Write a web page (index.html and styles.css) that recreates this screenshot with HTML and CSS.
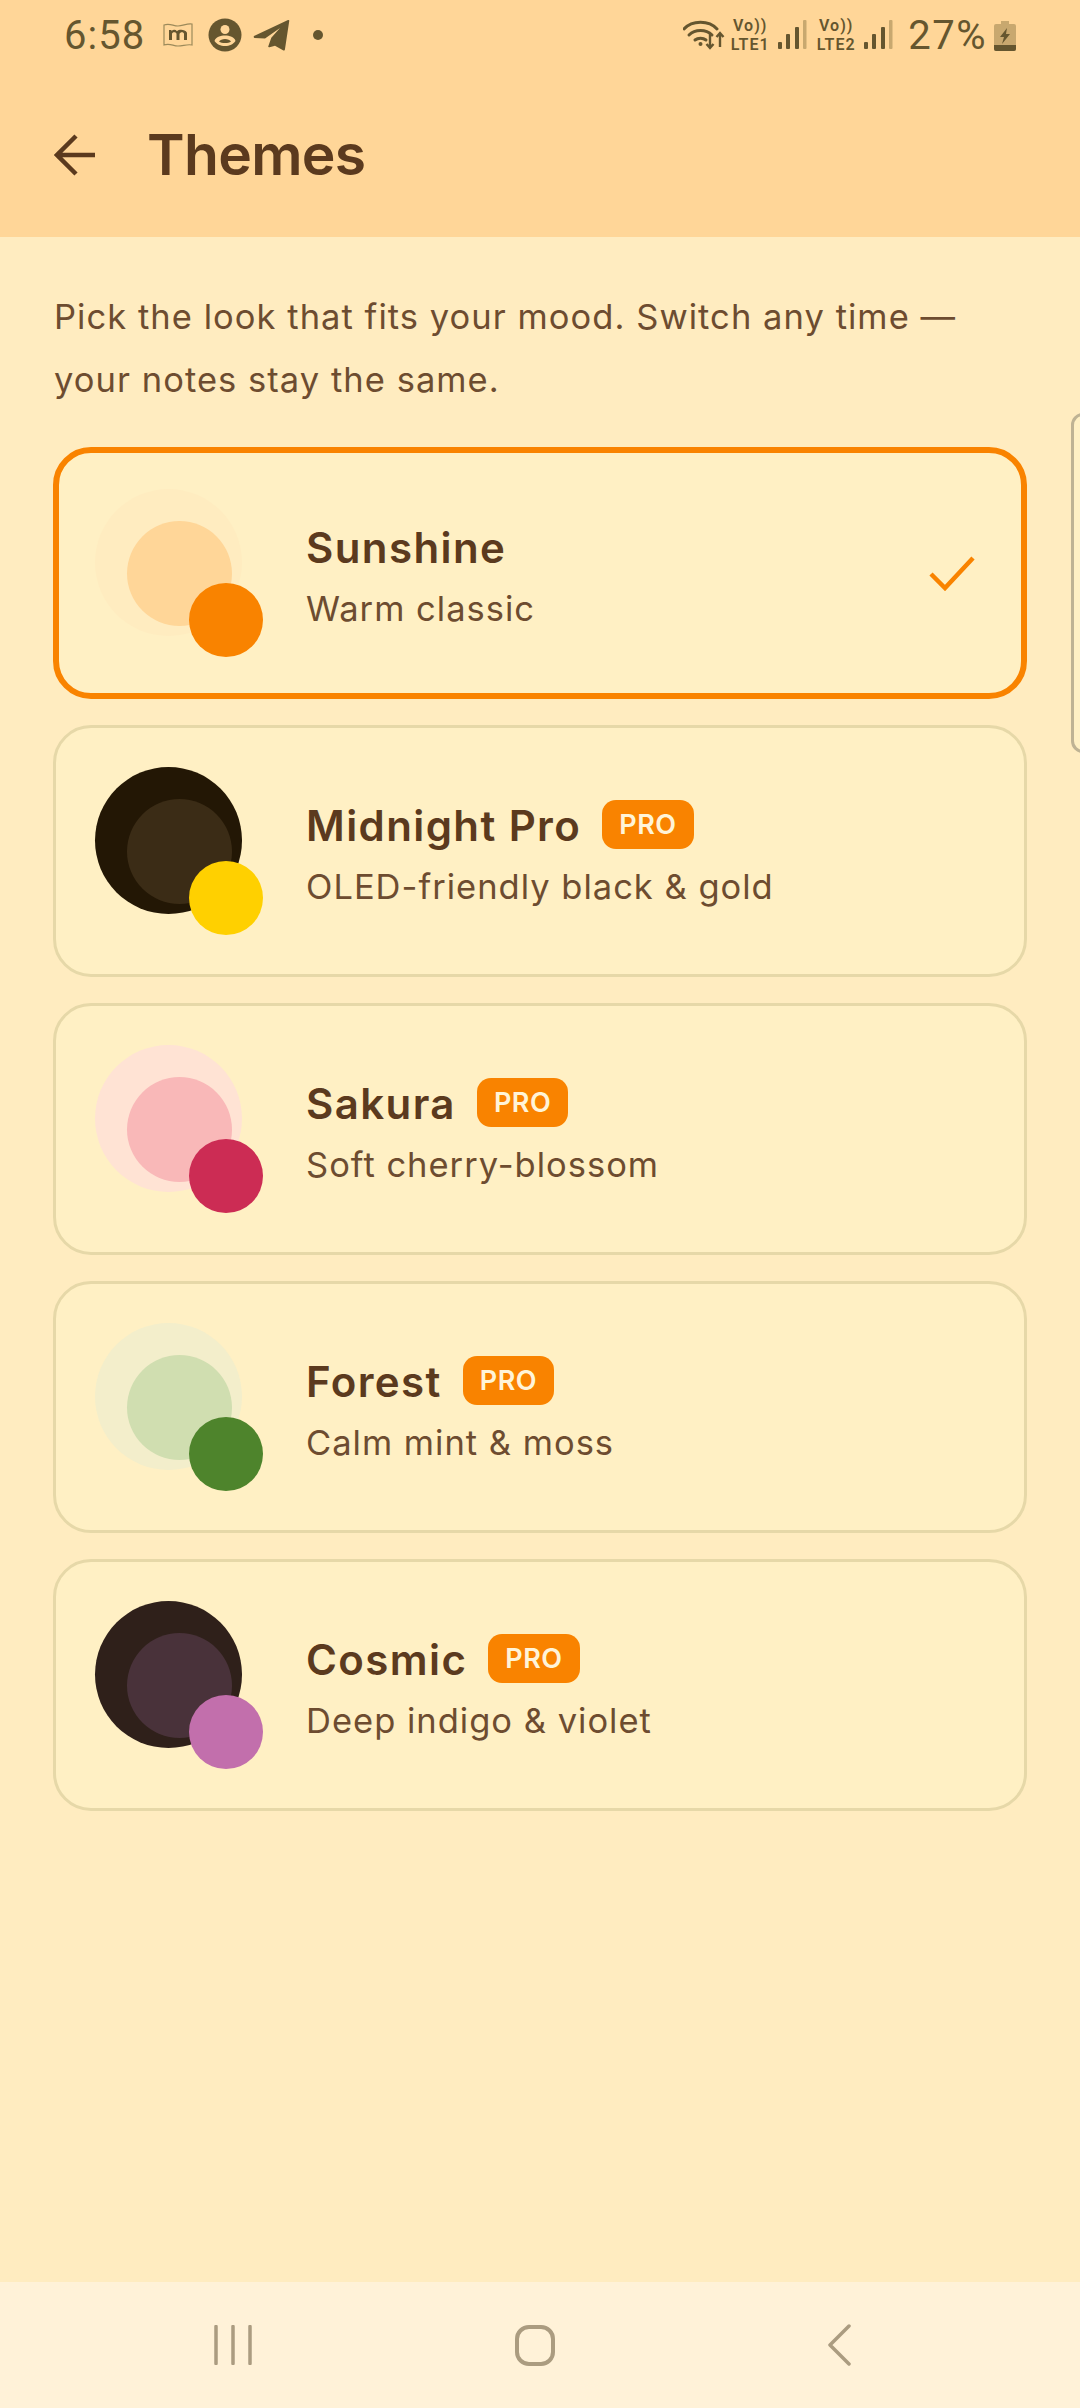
FILE: index.html
```html
<!DOCTYPE html>
<html lang="en">
<head>
  <meta charset="UTF-8" />
  <meta name="viewport" content="width=device-width, initial-scale=1" />
  <title>Themes</title>
  <link rel="stylesheet" href="styles.css">
</head>
<body>
  <div class="phone">
    <header class="appbar">
      <div class="status">
        <div class="status-left">
          <span class="time">6:58</span>
          <svg class="ic-m" viewBox="0 0 30 26"><path d="M1 3c6-2 9 1 14 1s9-3 14-2v21c-5-1-9 1-14 1s-8-3-14-1z" fill="none" stroke="#9c8a5a" stroke-width="1.2"/><path d="M6 18V8h2.500v1.200c1.500-1.800 4-1.800 5.500 0 2-2 8-2 10 1.500V18h-3v-6c0-2.500-4-2.500-4.500 0v6h-3v-6c0-2.500-4.500-2.500-4.500 0v6z" fill="#65562f"/></svg>
          <svg class="ic-avatar" viewBox="0 0 34 34"><circle cx="17" cy="17" r="16.500" fill="#65562f"/><circle cx="17" cy="11.500" r="4.500" fill="#ffd698"/><path d="M6.500 23c1-4 6-5.500 10.500-5.500s9.500 1.500 10.500 5.500c-2 3-6 5-10.500 5s-8.500-2-10.500-5z" fill="#ffd698"/><path d="M11 23.500c1-1.500 3.500-2.500 6-2.500s5 1 6 2.500c-1.500 1-3.500 1.500-6 1.500s-4.500-.5-6-1.500z" fill="#65562f"/></svg>
          <svg class="ic-send" viewBox="0 0 37 32"><path d="M1 17 35 1c1-.3 1.500 .2 1.200 1.200L32 30c-.2 1.500-1 1.800-2 1.200l-8-4.500-5.500 1.500c-1 .2-1.500-.2-1.200-1l3-8.500L27 9 12 19.500 1.500 19c-1-.3-1-1.500-.5-2z" fill="#65562f"/></svg>
          <span class="dot"></span>
        </div>
        <div class="status-right">
          <svg class="ic-wifi" viewBox="0 0 42 32"><g fill="none" stroke="#65562f" stroke-width="3" stroke-linecap="round"><path d="M1 10C9 1 26 1 34 10"/><path d="M6 16c6-6 17-6 23 0"/><path d="M12 21c3-2.500 8-2.500 11 0"/></g><circle cx="17.500" cy="25" r="2" fill="#65562f"/><path d="M27 15v14m-3.500-4 3.500 4 3.500-4M37 28V14m-3.500 4 3.500-4 3.500 4" fill="none" stroke="#65562f" stroke-width="2.400"/></svg>
          <span class="volte"><b>Vo))</b><b>LTE1</b></span>
          <svg class="ic-signal" viewBox="0 0 29 30"><g fill="#65562f"><rect x="0" y="22" width="4" height="7" rx="1"/><rect x="8" y="14" width="4" height="15" rx="1"/><rect x="17" y="7" width="4" height="22" rx="1"/></g><rect x="25" y="0" width="3.500" height="29" rx="1" fill="#c8a86f"/></svg>
          <span class="volte"><b>Vo))</b><b>LTE2</b></span>
          <svg class="ic-signal" viewBox="0 0 29 30"><g fill="#65562f"><rect x="0" y="22" width="4" height="7" rx="1"/><rect x="8" y="14" width="4" height="15" rx="1"/><rect x="17" y="7" width="4" height="22" rx="1"/></g><rect x="25" y="0" width="3.500" height="29" rx="1" fill="#c8a86f"/></svg>
          <span class="battery-pct">27%</span>
          <svg class="ic-battery" viewBox="0 0 22 31"><path d="M7 1h8v3h5a2 2 0 0 1 2 2v23a2 2 0 0 1-2 2H2a2 2 0 0 1-2-2V6a2 2 0 0 1 2-2h5z" fill="#c8a86f"/><path d="M0 25h22v4a2 2 0 0 1-2 2H2a2 2 0 0 1-2-2z" fill="#65562f"/><path d="M13 8 6 17h4l-2 7 8-10h-4z" fill="#65562f"/></svg>
        </div>
      </div>
      <div class="toolbar">
        <svg class="ic-back" viewBox="0 0 42 42"><path d="M41 21H4M22 2 3 21l19 19" fill="none" stroke="#5b3a1e" stroke-width="4.500"/></svg>
        <h1>Themes</h1>
      </div>
    </header>

    <main class="content">
      <p class="intro">Pick the look that fits your mood. Switch any time — your notes stay the same.</p>

      <div class="card selected">
        <div class="swatch">
          <span class="outer sunshine-a"></span><span class="inner sunshine-b"></span><span class="accent sunshine-c"></span>
        </div>
        <div class="info">
          <div class="name-row"><span class="name">Sunshine</span></div>
          <div class="desc">Warm classic</div>
        </div>
        <svg class="ic-check" viewBox="0 0 46 36"><path d="M2 19l14 14L44 3" fill="none" stroke="#f98300" stroke-width="4.500"/></svg>
      </div>

      <div class="card">
        <div class="swatch">
          <span class="outer midnight-a"></span><span class="inner midnight-b"></span><span class="accent midnight-c"></span>
        </div>
        <div class="info">
          <div class="name-row"><span class="name">Midnight Pro</span><span class="pro">PRO</span></div>
          <div class="desc">OLED-friendly black &amp; gold</div>
        </div>
      </div>

      <div class="card">
        <div class="swatch">
          <span class="outer sakura-a"></span><span class="inner sakura-b"></span><span class="accent sakura-c"></span>
        </div>
        <div class="info">
          <div class="name-row"><span class="name">Sakura</span><span class="pro">PRO</span></div>
          <div class="desc">Soft cherry-blossom</div>
        </div>
      </div>

      <div class="card">
        <div class="swatch">
          <span class="outer forest-a"></span><span class="inner forest-b"></span><span class="accent forest-c"></span>
        </div>
        <div class="info">
          <div class="name-row"><span class="name">Forest</span><span class="pro">PRO</span></div>
          <div class="desc">Calm mint &amp; moss</div>
        </div>
      </div>

      <div class="card">
        <div class="swatch">
          <span class="outer cosmic-a"></span><span class="inner cosmic-b"></span><span class="accent cosmic-c"></span>
        </div>
        <div class="info">
          <div class="name-row"><span class="name">Cosmic</span><span class="pro">PRO</span></div>
          <div class="desc">Deep indigo &amp; violet</div>
        </div>
      </div>
    </main>

    <div class="edge-handle"></div>

    <nav class="navbar">
      <svg class="ic-recents" viewBox="0 0 38 40"><path d="M2 1.500v37M19 1.500v37M36 1.500v37" stroke="#ab9c80" stroke-width="3.500" stroke-linecap="round"/></svg>
      <svg class="ic-home" viewBox="0 0 40 41"><rect x="2" y="2" width="36" height="37" rx="12" fill="none" stroke="#ab9c80" stroke-width="4"/></svg>
      <svg class="ic-navback" viewBox="0 0 24 42"><path d="M22 2 3 21l19 19" fill="none" stroke="#ab9c80" stroke-width="3.500" stroke-linecap="round" stroke-linejoin="round"/></svg>
    </nav>
  </div>
</body>
</html>
```

FILE: styles.css
```css
* {
  box-sizing: border-box;
}

html, body {
  margin: 0;
  padding: 0;
}

body {
  font-family: Inter, 'Noto Sans', sans-serif;
  color: #5b3a1e;
}

.phone {
  position: relative;
  width: 1080px;
  height: 2408px;
  display: flex;
  flex-direction: column;
  background: #ffecc0;
  overflow: hidden;
}

/* Top bar */
.appbar {
  height: 237px;
  background: #ffd698;
}

.status {
  height: 70px;
  padding: 0 64px 0 64px;
  display: flex;
  justify-content: space-between;
  align-items: center;
  color: #65562f;
}

.status-left, .status-right {
  display: flex;
  align-items: center;
}

.time {
  font-family: Roboto, sans-serif;
  font-size: 40px;
  width: 99px;
  letter-spacing: 1px;
}

.ic-m {
  width: 30px;
  height: 26px;
  margin-right: 15px;
}

.ic-avatar {
  width: 34px;
  height: 34px;
  margin-right: 11px;
}

.ic-send {
  width: 37px;
  height: 32px;
  margin-right: 23px;
}

.dot {
  width: 10px;
  height: 10px;
  border-radius: 50%;
  background: #65562f;
}

.ic-wifi {
  width: 42px;
  height: 32px;
  margin-right: 4px;
}

.volte {
  display: flex;
  flex-direction: column;
  align-items: center;
  width: 42px;
  font-family: Roboto, sans-serif;
  font-size: 16px;
  line-height: 19px;
  letter-spacing: 1px;
  margin-right: 7px;
}

.volte b {
  font-weight: 600;
}

.ic-signal {
  width: 29px;
  height: 30px;
  margin-right: 8px;
}

.battery-pct {
  font-family: Roboto, sans-serif;
  font-size: 40px;
  letter-spacing: 1.500px;
  margin: 0 7px 0 7px;
}

.ic-battery {
  width: 22px;
  height: 31px;
}

.toolbar {
  height: 167px;
  padding: 3px 0 0 54px;
  display: flex;
  align-items: center;
  gap: 51px;
}

.ic-back {
  width: 42px;
  height: 42px;
}

.toolbar h1 {
  margin: 0;
  font-size: 57px;
  font-weight: 600;
  letter-spacing: -0.7px;
  line-height: 70px;
}

/* Content */
.content {
  flex: 1;
  padding: 48px 53px 0;
}

.intro {
  margin: 0 0 36px;
  font-size: 34.500px;
  line-height: 63px;
  letter-spacing: 1.050px;
  color: #6d4c30;
  padding-left: 1px;
}

.card {
  height: 252px;
  margin-bottom: 26px;
  padding: 0 39px;
  display: flex;
  align-items: center;
  background: #fff0c4;
  border: 3px solid #e6d8a8;
  border-radius: 38px;
}

.card.selected {
  border: 6px solid #f98300;
  padding: 0 36px;
}

.swatch {
  position: relative;
  flex: none;
  width: 168px;
  height: 168px;
  margin-right: 43px;
}

.swatch span {
  position: absolute;
  border-radius: 50%;
}

.outer {
  left: 0;
  top: 0;
  width: 147px;
  height: 147px;
}

.inner {
  left: 32px;
  top: 32px;
  width: 105px;
  height: 105px;
}

.accent {
  left: 94px;
  top: 94px;
  width: 74px;
  height: 74px;
}

.sunshine-a { background: #ffecc0; }
.sunshine-b { background: #ffd698; }
.sunshine-c { background: #f98300; }
.midnight-a { background: #231705; }
.midnight-b { background: #3b2c16; }
.midnight-c { background: #ffd000; }
.sakura-a { background: #ffe3d4; }
.sakura-b { background: #f9b8b8; }
.sakura-c { background: #cc2c54; }
.forest-a { background: #f3eecb; }
.forest-b { background: #d0deb0; }
.forest-c { background: #4e842c; }
.cosmic-a { background: #2f201a; }
.cosmic-b { background: #49323a; }
.cosmic-c { background: #c26fac; }

.info {
  flex: 1;
  padding-top: 3px;
}

.name-row {
  display: flex;
  align-items: center;
  gap: 21px;
  height: 56px;
}

.name {
  font-size: 42px;
  font-weight: 600;
  letter-spacing: 1.400px;
}

.pro {
  height: 49px;
  padding: 0 17px;
  margin-bottom: 3px;
  display: flex;
  align-items: center;
  border-radius: 14px;
  background: #f98300;
  color: #fff4d8;
  font-size: 27px;
  font-weight: 600;
  letter-spacing: 0.5px;
}

.desc {
  margin-top: 12px;
  font-size: 34.500px;
  line-height: 42px;
  letter-spacing: 1px;
  color: #6d4c30;
}

.ic-check {
  width: 46px;
  height: 36px;
  margin-right: 10px;
}

/* sliver of the edge panel on the right side */
.edge-handle {
  position: absolute;
  left: 1071px;
  top: 413px;
  width: 30px;
  height: 340px;
  border: 3px solid #bfb394;
  border-radius: 12px;
  background: #fff0c4;
}

/* Bottom navigation */
.navbar {
  height: 126px;
  display: flex;
  align-items: center;
  background: #fff2d8;
  padding-left: 214px;
}

.ic-recents {
  width: 38px;
  height: 40px;
  margin-right: 263px;
}

.ic-home {
  width: 40px;
  height: 41px;
  margin-right: 272px;
}

.ic-navback {
  width: 24px;
  height: 42px;
}
```
